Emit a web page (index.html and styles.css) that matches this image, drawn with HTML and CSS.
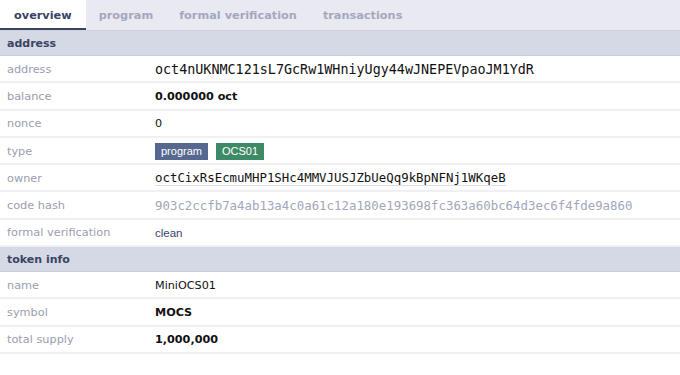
FILE: index.html
```html
<!DOCTYPE html>
<html>
<head>
    <meta charset="utf-8">
    <title>account</title>
    <link rel="stylesheet" href="styles.css">
</head>
<body>
<div class="tabs">
    <a href="#" class="tab active">overview</a>
    <a href="#" class="tab">program</a>
    <a href="#" class="tab">formal verification</a>
    <a href="#" class="tab">transactions</a>
</div>

<div class="section">address</div>
<div class="row">
    <div class="label">address</div>
    <div class="value mono big">oct4nUKNMC121sL7GcRw1WHniyUgy44wJNEPEVpaoJM1YdR</div>
</div>
<div class="row">
    <div class="label">balance</div>
    <div class="value bold">0.000000 oct</div>
</div>
<div class="row">
    <div class="label">nonce</div>
    <div class="value">0</div>
</div>
<div class="row">
    <div class="label">type</div>
    <div class="value">
        <span class="badge badge-program">program</span>
        <span class="badge badge-ocs">OCS01</span>
    </div>
</div>
<div class="row">
    <div class="label">owner</div>
    <div class="value"><a href="#" class="mono link">octCixRsEcmuMHP1SHc4MMVJUSJZbUeQq9kBpNFNj1WKqeB</a></div>
</div>
<div class="row">
    <div class="label">code hash</div>
    <div class="value mono muted">903c2ccfb7a4ab13a4c0a61c12a180e193698fc363a60bc64d3ec6f4fde9a860</div>
</div>
<div class="row">
    <div class="label">formal verification</div>
    <div class="value plain">clean</div>
</div>

<div class="section">token info</div>
<div class="row">
    <div class="label">name</div>
    <div class="value">MiniOCS01</div>
</div>
<div class="row">
    <div class="label">symbol</div>
    <div class="value bold">MOCS</div>
</div>
<div class="row">
    <div class="label">total supply</div>
    <div class="value bold">1,000,000</div>
</div>
</body>
</html>
```

FILE: styles.css
```css
* {
    box-sizing: border-box;
    margin: 0;
    padding: 0;
}

body {
    background: #fff;
    font-family: "DejaVu Sans", Verdana, sans-serif;
    font-size: 11.2px;
    color: #111;
}

.tabs {
    display: flex;
    height: 31px;
    background: #e9e9f2;
    border-bottom: 1px solid #cfd2dd;
}

.tab {
    display: flex;
    align-items: center;
    padding: 1px 13px 1px;
    font-weight: bold;
    font-size: 11.3px;
    color: #a4a8bc;
    text-decoration: none;
}

.tab.active {
    background: #fff;
    color: #394363;
    padding: 2px 14px 0;
    border-bottom: 2px solid #394363;
}

.section {
    display: flex;
    align-items: center;
    height: 25px;
    padding: 1px 0 0 7px;
    background: #d5d9e5;
    border-bottom: 1px solid #c9cdd9;
    color: #394363;
    font-weight: bold;
    font-size: 11px;
}

.row {
    display: flex;
    align-items: center;
    height: 27.3px;
    padding-top: 1px;
    border-bottom: 2px solid #f0f0f4;
}

.label {
    width: 155px;
    padding-left: 7px;
    color: #9b9daf;
    font-size: 11.3px;
}

.value {
    display: flex;
    align-items: center;
    gap: 8px;
}

.bold {
    font-weight: bold;
}

.mono {
    font-family: "DejaVu Sans Mono", monospace;
    font-size: 12.4px;
}

.mono.big {
    font-size: 13.4px;
}

.muted {
    color: #a2a6ba;
}

.link {
    color: #111;
    text-decoration: none;
    border-bottom: 1px solid #dcdce2;
}

.plain {
    font-family: "Liberation Sans", Arial, sans-serif;
    font-size: 11.5px;
    color: #394363;
}

.badge {
    display: inline-block;
    height: 17px;
    line-height: 17px;
    padding: 0 6px;
    color: #fff;
    font-family: "Liberation Sans", Arial, sans-serif;
    font-size: 11px;
}

.badge-program {
    background: #56688f;
}

.badge-ocs {
    background: #3f8a66;
}
```
